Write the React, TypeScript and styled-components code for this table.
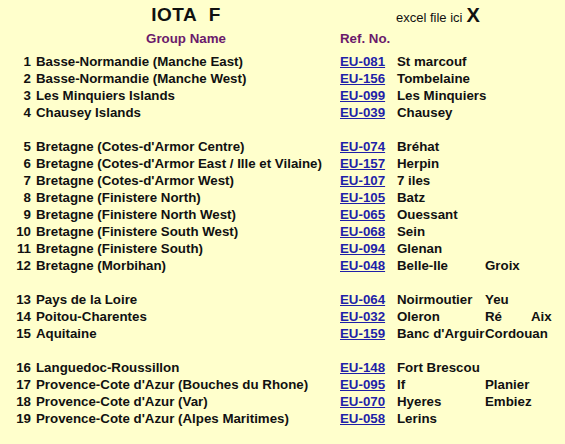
import React from "react";
import styled, { createGlobalStyle } from "styled-components";

const Global = createGlobalStyle`
  html, body { margin: 0; padding: 0; background: #ffffcc; }
  body { font-family: "Liberation Sans", Arial, sans-serif; color: #111; }
`;

const Page = styled.div`
  width: 565px;
  height: 444px;
  background: #ffffcc;
  display: flex;
  flex-direction: column;
`;

const COLS = "32px 304px 57px 88px 46px 1fr";

const TitleRow = styled.div`
  display: grid;
  grid-template-columns: 32px 304px 57px 1fr;
  height: 30px;
  align-items: center;
`;

const Title = styled.div`
  grid-column: 2;
  text-align: center;
  font-size: 19px;
  font-weight: bold;
  letter-spacing: 0.5px;
  padding-left: 4px;
`;

const Excel = styled.div`
  grid-column: 4;
  padding-left: 3px;
  font-size: 13px;
  white-space: nowrap;
  display: flex;
  align-items: baseline;
  gap: 4px;
`;

const BigX = styled.span`
  font-size: 20px;
  font-weight: bold;
`;

const HeaderRow = styled.div`
  display: grid;
  grid-template-columns: 32px 304px 57px 1fr;
  height: 23px;
  align-items: start;
  color: #6b1a6b;
  font-size: 13.3px;
  font-weight: bold;
`;

const HeadCell = styled.div<{ $center?: boolean }>`
  text-align: ${(p) => (p.$center ? "center" : "left")};
  padding-left: 4px;
  line-height: 17px;
  white-space: nowrap;
`;

const Table = styled.div`
  display: grid;
  grid-template-columns: ${COLS};
  grid-auto-rows: 17px;
`;

const Cell = styled.div<{ $align?: "left" | "right" }>`
  padding-left: ${(p) => (p.$align === "right" ? "0" : "4px")};
  padding-right: ${(p) => (p.$align === "right" ? "1px" : "0")};
  text-align: ${(p) => p.$align ?? "left"};
  font-size: 13.3px;
  font-weight: bold;
  line-height: 17px;
  white-space: nowrap;
`;

const Spacer = styled.div`
  grid-column: 1 / -1;
`;

const RefLink = styled.a`
  color: #1f1fa8;
  text-decoration: underline;
`;

type Row = [number, string, string, string?, string?, string?] | null;

const rows: Row[] = [
  [1, "Basse-Normandie (Manche East)", "EU-081", "St marcouf"],
  [2, "Basse-Normandie (Manche West)", "EU-156", "Tombelaine"],
  [3, "Les Minquiers Islands", "EU-099", "Les Minquiers"],
  [4, "Chausey Islands", "EU-039", "Chausey"],
  null,
  [5, "Bretagne (Cotes-d'Armor Centre)", "EU-074", "Bréhat"],
  [6, "Bretagne (Cotes-d'Armor East / Ille et Vilaine)", "EU-157", "Herpin"],
  [7, "Bretagne (Cotes-d'Armor West)", "EU-107", "7 iles"],
  [8, "Bretagne (Finistere North)", "EU-105", "Batz"],
  [9, "Bretagne (Finistere North West)", "EU-065", "Ouessant"],
  [10, "Bretagne (Finistere South West)", "EU-068", "Sein"],
  [11, "Bretagne (Finistere South)", "EU-094", "Glenan"],
  [12, "Bretagne (Morbihan)", "EU-048", "Belle-Ile", "Groix"],
  null,
  [13, "Pays de la Loire", "EU-064", "Noirmoutier", "Yeu"],
  [14, "Poitou-Charentes", "EU-032", "Oleron", "Ré", "Aix"],
  [15, "Aquitaine", "EU-159", "Banc d'Arguir", "Cordouan"],
  null,
  [16, "Languedoc-Roussillon", "EU-148", "Fort Brescou"],
  [17, "Provence-Cote d'Azur (Bouches du Rhone)", "EU-095", "If", "Planier"],
  [18, "Provence-Cote d'Azur (Var)", "EU-070", "Hyeres", "Embiez"],
  [19, "Provence-Cote d'Azur (Alpes Maritimes)", "EU-058", "Lerins"],
];

export default function App() {
  return (
    <>
      <Global />
      <Page>
        <TitleRow>
          <Title>IOTA&nbsp;&nbsp;F</Title>
          <Excel>
            excel file ici <BigX>X</BigX>
          </Excel>
        </TitleRow>
        <HeaderRow>
          <div />
          <HeadCell $center>Group Name</HeadCell>
          <HeadCell>Ref. No.</HeadCell>
        </HeaderRow>
        <Table>
          {rows.map((r, i) =>
            r === null ? (
              <Spacer key={i} />
            ) : (
              <React.Fragment key={i}>
                <Cell $align="right">{r[0]}</Cell>
                <Cell>{r[1]}</Cell>
                <Cell>
                  <RefLink href="#">{r[2]}</RefLink>
                </Cell>
                <Cell>{r[3] ?? ""}</Cell>
                <Cell>{r[4] ?? ""}</Cell>
                <Cell>{r[5] ?? ""}</Cell>
              </React.Fragment>
            )
          )}
        </Table>
      </Page>
    </>
  );
}
